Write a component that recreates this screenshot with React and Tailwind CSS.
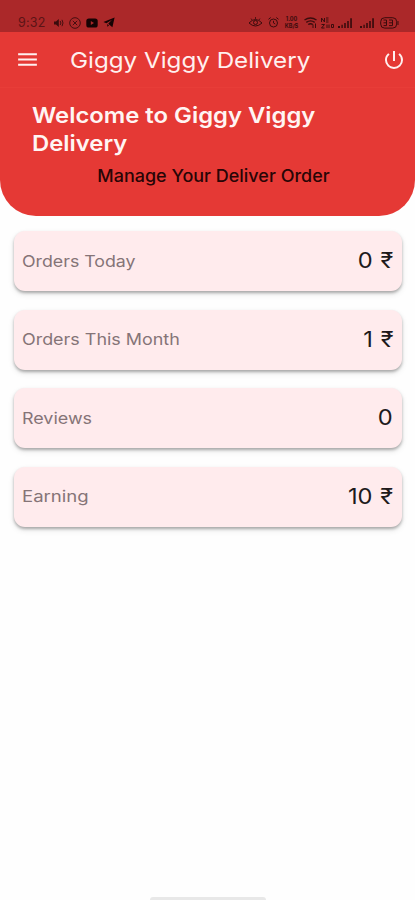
import { MdMenu, MdPowerSettingsNew } from "react-icons/md";

const stats = [
  { label: "Orders Today", value: "0 ₹", stretch: "scale-x-[1.11]" },
  { label: "Orders This Month", value: "1 ₹", stretch: "scale-x-[1.12]" },
  { label: "Reviews", value: "0", stretch: "scale-x-[1.12]" },
  { label: "Earning", value: "10 ₹", stretch: "scale-x-[1.16]" },
];

const Signal = () => (
  <svg width="16" height="12" viewBox="0 0 16 12" fill="currentColor">
    <path d="M0 9h2v2H0zM3.4 7.8h1.4V11H3.4zM6.2 6h1.6v5H6.2zM9.2 4h1.6v7H9.2zM12.2 1.2h1.7V11h-1.7z" />
  </svg>
);

const StatusBar = () => (
  <div className="flex h-8 items-end bg-[#ab2829] pb-[3px] pl-[18px] pr-[16px] text-[#3a0c0d]">
    <span className="w-[28px] text-[12.5px] leading-[13px] tracking-[0.2px] text-[#5c1416]">9:32</span>
    {/* left side notifications */}
    <div className="ml-[8px] flex h-[13px] items-center gap-[5px]">
      <svg width="10" height="10" viewBox="0 0 10 10" fill="none" stroke="currentColor">
        <path d="M0 3.5h2L4.8 1v8L2 6.5H0z" fill="currentColor" stroke="none" />
        <path d="M6.2 3q1.4 2 0 4M8 1.8q2 3.2 0 6.4" strokeWidth="0.9" />
      </svg>
      <svg width="12" height="12" viewBox="0 0 12 12" fill="none" stroke="currentColor" strokeWidth="0.9">
        <circle cx="6" cy="6" r="5.3" />
        <path d="M3.8 3.8l4.4 4.4M8.2 3.8L3.8 8.2" />
      </svg>
      <svg width="12" height="10" viewBox="0 0 12 10">
        <rect x="0.3" y="0.4" width="11.4" height="9.2" rx="2.6" fill="#160304" />
        <path d="M4.8 3l3.2 2-3.2 2z" fill="#ab2829" />
      </svg>
      <svg width="12" height="11" viewBox="0 0 12 11" fill="#160304">
        <path d="M11.6 0.6L0.4 5l3 1.2L9 2.8 5.2 6.8l4.2 3.4z" />
        <path d="M4.2 7l1.8 1.4-1.6 1.4z" />
      </svg>
    </div>
    {/* right side system icons */}
    <div className="ml-auto flex h-[13px] items-center">
      <svg width="15" height="11" viewBox="0 0 15 11" fill="none" stroke="currentColor">
        <path d="M1 6q6.5 -7 13 0q-6.5 6 -13 0z" />
        <circle cx="7.5" cy="5.5" r="2" />
        <path d="M7.5 0v2M3 1.5l1 1.5M12 1.5l-1 1.5" strokeWidth="0.8" />
      </svg>
      <svg className="ml-[5px]" width="11" height="11" viewBox="0 0 11 11" fill="none" stroke="currentColor">
        <circle cx="5.5" cy="6" r="4" />
        <path d="M5.5 3.8V6l1.7 1M0.5 2.3L2.7 0.5M10.5 2.3L8.3 0.5" />
      </svg>
      <div className="ml-[4px] flex w-[17px] flex-col text-center text-[5.5px] font-bold leading-[7px]">
        <span>1.00</span>
        <span>KB/S</span>
      </div>
      <svg className="ml-[4px]" width="13" height="12" viewBox="0 0 13 12" fill="none" stroke="currentColor" strokeWidth="1.4">
        <path d="M0.5 3q6 -4 12 0M2.3 5.4q4.200 -3 8.400 0M4.2 7.5q2.3 -1.6 4.6 0" />
        <path d="M9 7.5v3.5M11.5 6.5v4.5" strokeWidth="1" />
      </svg>
      <svg className="ml-[4px]" width="13" height="12" viewBox="0 0 13 12" fill="none" stroke="currentColor">
        <path d="M0.5 5V1l3 4V1M5 1h2.5M5 3h2.5M5 5h2.5M0.5 7.5h3L0.5 11h3M6 7.5v3.5M8 7.5v3.500M10.5 7.5h2v3h-2z" />
      </svg>
      <span className="ml-[4px]"><Signal /></span>
      <span className="ml-[6px]"><Signal /></span>
      <svg className="ml-[4px]" width="19" height="12" viewBox="0 0 19 12" fill="none" stroke="currentColor">
        <rect x="0.7" y="0.7" width="16" height="10.4" rx="4" />
        <path d="M18 4v4M3.5 3h3v5.6h-3M3.5 5.8h3M9 3h3.5v5.6H9M9 5.8h3.5" />
      </svg>
    </div>
  </div>
);

const App = () => {
  return (
    <div className="flex h-[900px] w-full flex-col overflow-hidden bg-[#fefefe] font-['Inter',sans-serif]">
      <StatusBar />

      {/* App bar */}
      <header className="flex h-[56px] items-center border-b border-[#e83d38] bg-[#e53935] text-[#fff0ef]">
        <MdMenu className="ml-[15px] h-[25px] w-[25px]" />
        <h1 className="ml-[30px] origin-left scale-x-[1.1] whitespace-nowrap text-[22px] leading-7">
          Giggy Viggy Delivery
        </h1>
        <MdPowerSettingsNew className="ml-auto mr-[9px] h-[24px] w-[24px]" />
      </header>

      {/* Welcome banner */}
      <section className="h-[128px] shrink-0 rounded-b-[36px] bg-[#e53935] pt-[13px]">
        <h2 className="ml-[32px] w-[270px] origin-left scale-x-[1.083] text-[22px] font-semibold leading-[28px] text-[#fff5f3]">
          Welcome to Giggy Viggy
          <br />
          Delivery
        </h2>
        <p className="ml-[12px] mt-[7px] scale-x-[1.057] text-center text-[17px] font-medium leading-6 text-[#280506]">
          Manage Your Deliver Order
        </p>
      </section>

      <main className="mt-[15px] flex flex-col gap-[18.5px] pl-[14px] pr-[13px]">
        {stats.map((item) => (
          <div
            key={item.label}
            className="flex h-[60px] items-center justify-between rounded-[11px] bg-[#ffebed] pb-px pl-[8px] pr-[9px] shadow-[0_2px_3px_rgba(0,0,0,0.28),0_3px_6px_rgba(0,0,0,0.1)]"
          >
            <span className={`origin-left text-[16px] text-[#857477] ${item.stretch}`}>{item.label}</span>
            <span className="origin-right scale-x-[1.1] text-[21.5px] text-[#201a1b] [word-spacing:1px]">{item.value}</span>
          </div>
        ))}
      </main>

      {/* Gesture handle */}
      <div className="mx-auto mt-auto h-[3px] w-[116px] rounded-t-sm bg-[#e8e8e8]" />
    </div>
  );
};

export default App;
